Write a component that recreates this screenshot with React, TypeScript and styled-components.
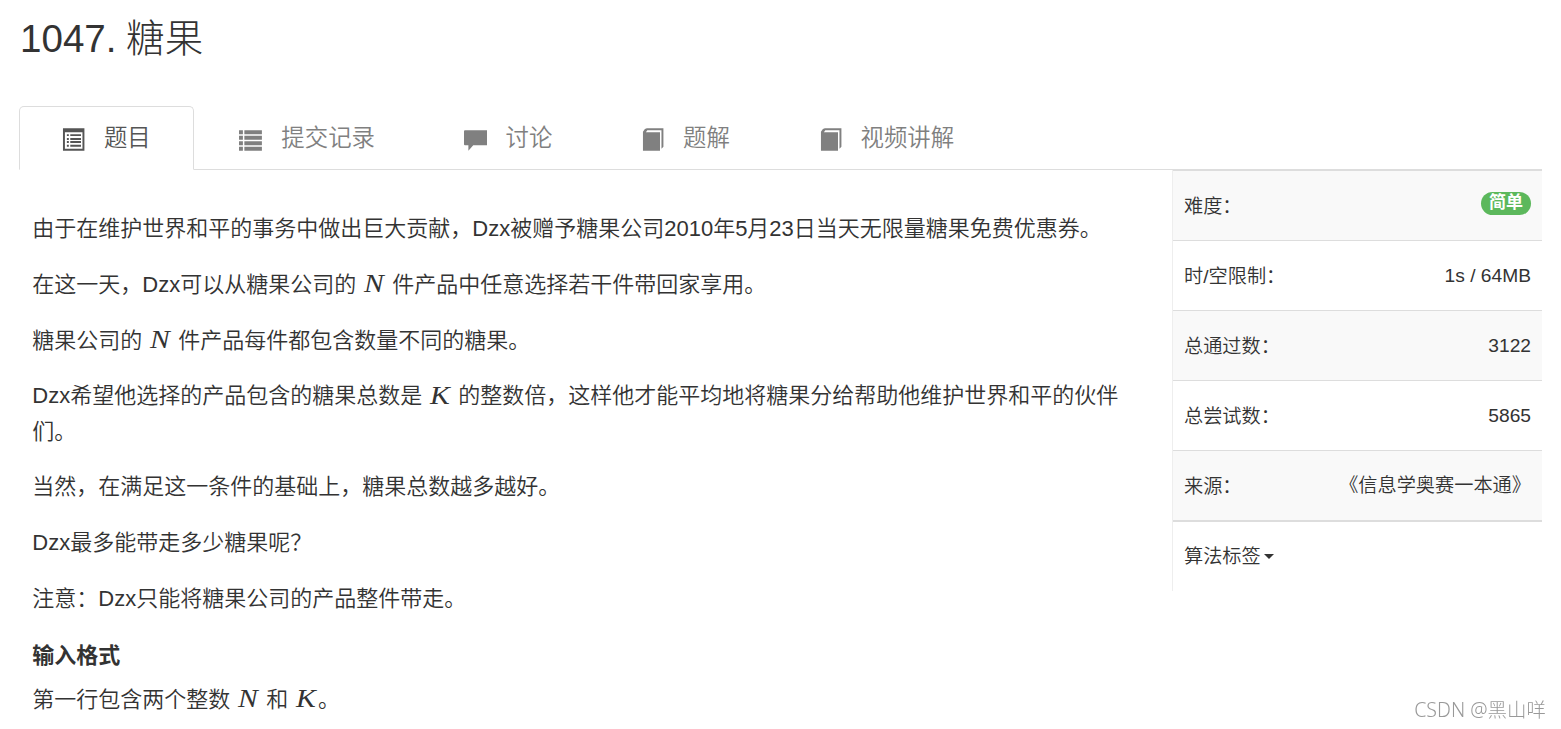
import type { ReactNode } from 'react';
import styled, { createGlobalStyle } from 'styled-components';

const GlobalStyle = createGlobalStyle`
    * {
        box-sizing: border-box;
    }

    body {
        margin: 0;
        overflow: hidden;
        background: #fff;
        color: #333;
        font-family: 'Liberation Sans', 'Noto Sans CJK SC', sans-serif;
        font-size: 19.2px;
    }
`;

const Page = styled.div`
    padding: 0 19px;
    height: 729px;
`;

const Title = styled.h1`
    height: 106px;
    margin: 0;
    padding: 11px 0 0 1px;
    font-size: 38.6px;
    font-weight: 300;
    line-height: 56px;
    word-spacing: -1.2px;
`;

const TabList = styled.nav`
    display: flex;
    gap: 2.8px;
    height: 64px;
    border-bottom: 1px solid #ddd;
`;

const TabItem = styled.a<{ $isActive?: boolean }>`
    display: flex;
    gap: 18.5px;
    height: 64px;
    padding: 0 42px;
    border: 1px solid ${({ $isActive }) => ($isActive ? '#ddd' : 'transparent')};
    border-bottom-color: ${({ $isActive }) => ($isActive ? '#fff' : 'transparent')};
    border-radius: 5px 5px 0 0;
    color: ${({ $isActive }) => ($isActive ? '#555' : '#808080')};
    font-size: 23.4px;
    font-weight: 350;
    line-height: 63px;
    white-space: nowrap;

    svg {
        flex: none;
        width: 23.4px;
        height: 24px;
        margin-top: 20px;
    }
`;

const Content = styled.div`
    display: flex;
    justify-content: space-between;
`;

const Statement = styled.article`
    width: 1114px;
    padding: 41px 0 0 13.3px;
    font-size: 22px;
    font-weight: 350;
    line-height: 35.3px;
`;

const Paragraph = styled.p`
    margin: 0 0 20.5px;
`;

const SectionTitle = styled.h4`
    margin: 22px 0 8px;
    font-size: 22px;
    font-weight: 700;
    line-height: 35.3px;
`;

const Variable = styled.i`
    display: inline-block;
    width: 23.7px;
    font-family: 'Liberation Serif', serif;
    font-size: 26px;
    line-height: 20px;
    text-align: center;
    vertical-align: -0.6px;
    transform: scaleX(1.14);
`;

const Sidebar = styled.aside`
    width: 370px;
    height: 421px;
    border-left: 1px solid #eee;
`;

const InfoRow = styled.div<{ $isStriped?: boolean }>`
    display: flex;
    justify-content: space-between;
    height: 70px;
    padding: 0 11px;
    border-top: 1px solid #ddd;
    background: ${({ $isStriped }) => ($isStriped ? '#f9f9f9' : '#fff')};
    font-weight: 350;
    line-height: 69px;
`;

const InfoLabel = styled.span`
    line-height: 71px;
`;

const TagsRow = styled.div`
    display: flex;
    align-items: center;
    gap: 3px;
    height: 71px;
    padding: 0 11px 4px;
    border-top: 2px solid #ddd;
    font-weight: 350;
`;

const Caret = styled.span`
    margin-top: 4px;
    border-top: 5px solid #333;
    border-right: 5px solid transparent;
    border-left: 5px solid transparent;
`;

const Badge = styled.span`
    width: 50px;
    height: 23px;
    margin-top: 21px;
    border-radius: 12px;
    background: #5cb85c;
    color: #fff;
    font-size: 17px;
    font-weight: 700;
    line-height: 21px;
    text-align: center;
`;

const Watermark = styled.div`
    position: fixed;
    right: 15px;
    bottom: 4px;
    color: #999;
    font-family: 'Noto Sans', 'Noto Sans CJK SC', sans-serif;
    font-size: 19.5px;
    font-weight: 300;
    line-height: 30px;
`;

const ListAltIcon = () => (
    <svg viewBox="0 0 24 24" fill="currentColor">
        <path fillRule="evenodd" d="M1 1H23V24H1ZM3 5V22H21V5Z" />
        <path d="M5 7h2v2H5zM8.500 7h11v2h-11zM5 11h2v2H5zM8.500 11h11v2h-11zM5 14h2v2H5zM8.500 14h11v2h-11zM5 18h2v2H5zM8.500 18h11v2h-11z" />
    </svg>
);

const ListIcon = () => (
    <svg viewBox="0 0 24 24" fill="currentColor">
        <path d="M0 3h4v4H0zM5.500 3H23.500v4h-18zM0 8.700h4v4H0zM5.500 8.700H23.500v4h-18zM0 14.400h4v4H0zM5.500 14.400H23.500v4h-18zM0 20h4v4H0zM5.500 20H23.500v4h-18z" />
    </svg>
);

const CommentIcon = () => (
    <svg viewBox="0 0 24 24" fill="currentColor">
        <path d="M1 3H23Q24 3 24 4V17.500Q24 18.500 23 18.500H9.500L4.500 24V18.500H1Q0 18.500 0 17.500V4Q0 3 1 3Z" />
    </svg>
);

const BookIcon = () => (
    <svg viewBox="0 0 24 24" fill="currentColor">
        <path d="M2 4.500Q4 1 6 1H23V20L21 22V3H6.500L5 5H19.500V24H2Z" />
    </svg>
);

interface Tab {
    label: string;
    icon: ReactNode;
    isActive?: boolean;
}

const tabs: Tab[] = [
    { label: '题目', icon: <ListAltIcon />, isActive: true },
    { label: '提交记录', icon: <ListIcon /> },
    { label: '讨论', icon: <CommentIcon /> },
    { label: '题解', icon: <BookIcon /> },
    { label: '视频讲解', icon: <BookIcon /> },
];

const info = [
    { label: '难度：', value: <Badge>简单</Badge> },
    { label: '时/空限制：', value: '1s / 64MB' },
    { label: '总通过数：', value: '3122' },
    { label: '总尝试数：', value: '5865' },
    { label: '来源：', value: '《信息学奥赛一本通》' },
];

const App = () => (
    <>
        <GlobalStyle />
        <Page lang="zh-CN">
            <Title>1047. 糖果</Title>
            <TabList>
                {tabs.map(({ label, icon, isActive }) => (
                    <TabItem key={label} $isActive={isActive}>
                        {icon}
                        {label}
                    </TabItem>
                ))}
            </TabList>
            <Content>
                <Statement>
                    <Paragraph>
                        由于在维护世界和平的事务中做出巨大贡献，Dzx被赠予糖果公司2010年5月23日当天无限量糖果免费优惠券。
                    </Paragraph>
                    <Paragraph>
                        在这一天，Dzx可以从糖果公司的 <Variable>N</Variable>{' '}
                        件产品中任意选择若干件带回家享用。
                    </Paragraph>
                    <Paragraph>
                        糖果公司的 <Variable>N</Variable> 件产品每件都包含数量不同的糖果。
                    </Paragraph>
                    <Paragraph>
                        Dzx希望他选择的产品包含的糖果总数是 <Variable>K</Variable>{' '}
                        的整数倍，这样他才能平均地将糖果分给帮助他维护世界和平的伙伴们。
                    </Paragraph>
                    <Paragraph>当然，在满足这一条件的基础上，糖果总数越多越好。</Paragraph>
                    <Paragraph>Dzx最多能带走多少糖果呢？</Paragraph>
                    <Paragraph>注意：Dzx只能将糖果公司的产品整件带走。</Paragraph>
                    <SectionTitle>输入格式</SectionTitle>
                    <Paragraph>
                        第一行包含两个整数 <Variable>N</Variable> 和 <Variable>K</Variable>。
                    </Paragraph>
                </Statement>
                <Sidebar>
                    {info.map(({ label, value }, index) => (
                        <InfoRow key={label} $isStriped={index % 2 === 0}>
                            <InfoLabel>{label}</InfoLabel>
                            {typeof value === 'string' ? <span>{value}</span> : value}
                        </InfoRow>
                    ))}
                    <TagsRow>
                        算法标签
                        <Caret />
                    </TagsRow>
                </Sidebar>
            </Content>
            <Watermark>CSDN @黑山咩</Watermark>
        </Page>
    </>
);

export default App;
